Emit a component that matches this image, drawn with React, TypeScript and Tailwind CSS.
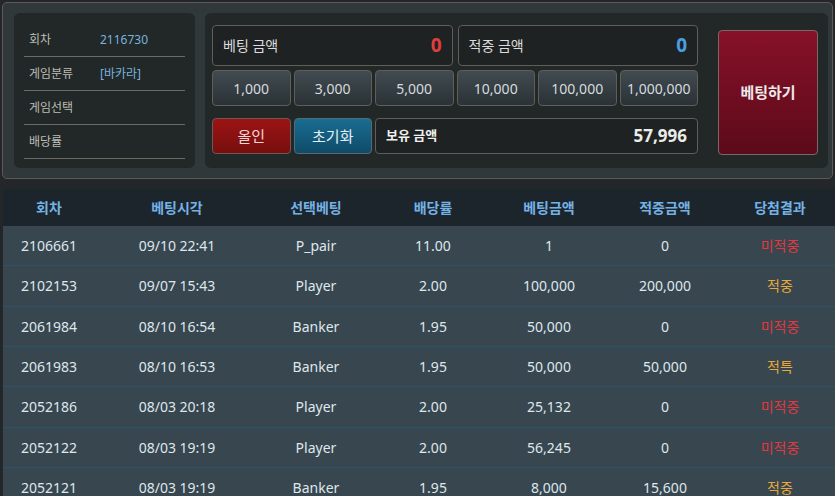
import React from "react";

const rows = [
  ["2106661", "09/10 22:41", "P_pair", "11.00", "1", "0", "미적중"],
  ["2102153", "09/07 15:43", "Player", "2.00", "100,000", "200,000", "적중"],
  ["2061984", "08/10 16:54", "Banker", "1.95", "50,000", "0", "미적중"],
  ["2061983", "08/10 16:53", "Banker", "1.95", "50,000", "50,000", "적특"],
  ["2052186", "08/03 20:18", "Player", "2.00", "25,132", "0", "미적중"],
  ["2052122", "08/03 19:19", "Player", "2.00", "56,245", "0", "미적중"],
  ["2052121", "08/03 19:19", "Banker", "1.95", "8,000", "15,600", "적중"],
];

const headers = ["회차", "베팅시각", "선택베팅", "배당률", "베팅금액", "적중금액", "당첨결과"];
const chips = ["1,000", "3,000", "5,000", "10,000", "100,000", "1,000,000"];

const info: [string, string][] = [
  ["회차", "2116730"],
  ["게임분류", "[바카라]"],
  ["게임선택", ""],
  ["배당률", ""],
];

export default function App() {
  return (
    <div
      className="w-[835px] h-[496px] overflow-hidden bg-[#23272a]"
      style={{ fontFamily: '"Noto Sans", "Noto Sans CJK KR", sans-serif' }}
    >
      <div className="ml-[2px] mt-[2px] w-[831px] h-[177px] border border-[#5c5b53] rounded-[5px] bg-[#30383a] flex gap-[10px] pl-[11px] pr-[4px] pt-[10px]">
        {/* left info panel */}
        <div className="w-[181px] h-[155px] rounded-[6px] bg-[#222727] px-[10px] pt-[10px]">
          {info.map(([k, v]) => (
            <div key={k} className="h-[34px] border-b border-[#6b6a62] flex items-center pl-[5px]">
              <div className="w-[71px] text-[12px] text-[#bdbdb5]">{k}</div>
              <div className="text-[12px] text-[#78b3de]">{v}</div>
            </div>
          ))}
        </div>
        {/* middle panel */}
        <div className="flex-1 h-[155px] rounded-[6px] bg-[#222727] pl-[7px] pt-[12px] flex">
          <div className="w-[486px] flex flex-col">
            <div className="grid grid-cols-2 gap-[5px] h-[41px]">
              <div className="rounded-[4px] border border-[#5f5e57] bg-[#1f2222] flex items-center justify-between px-[10px]">
                <span className="text-[14px] text-[#dcdcdc]">베팅 금액</span>
                <span className="text-[19px] font-bold text-[#e23c3c]">0</span>
              </div>
              <div className="rounded-[4px] border border-[#5f5e57] bg-[#1f2222] flex items-center justify-between px-[10px]">
                <span className="text-[14px] text-[#dcdcdc]">적중 금액</span>
                <span className="text-[19px] font-bold text-[#4a9fe4]">0</span>
              </div>
            </div>
            <div className="grid grid-cols-6 gap-[3px] h-[36px] mt-[4px]">
              {chips.map((c) => (
                <div
                  key={c}
                  className="rounded-[4px] border border-[#5f5e57] bg-gradient-to-b from-[#414b51] to-[#2a3236] flex items-center justify-center text-[14px] text-[#d6dbde]"
                >
                  {c}
                </div>
              ))}
            </div>
            <div className="grid grid-cols-6 gap-[3px] h-[36px] mt-[12px]">
              <div className="rounded-[4px] border border-[#6a5a55] bg-gradient-to-b from-[#9c1414] to-[#780e0e] flex items-center justify-center text-[15px] text-[#f2d6d6]">
                올인
              </div>
              <div className="rounded-[4px] border border-[#556a74] bg-gradient-to-b from-[#1a6d92] to-[#0f4b69] flex items-center justify-center text-[15px] text-[#e4eef4]">
                초기화
              </div>
              <div className="col-span-4 rounded-[4px] border border-[#5f5e57] bg-[#1f2222] flex items-center justify-between px-[10px]">
                <span className="text-[13px] font-bold text-[#f0f0f0]">보유 금액</span>
                <span className="text-[17px] font-bold text-[#ecece8]">57,996</span>
              </div>
            </div>
          </div>
          <div className="ml-[20px] mt-[5px] w-[100px] h-[125px] rounded-[4px] border border-[#7a6868] bg-gradient-to-b from-[#871128] to-[#5c0a1a] flex items-center justify-center text-[15px] font-bold text-[#eeeaea]">
            베팅하기
          </div>
        </div>
      </div>

      {/* table */}
      <div className="mt-[10px] ml-[3px] w-[832px]">
        <div className="grid grid-cols-[92px_164px_114px_120px_112px_120px_1fr] h-[37px] bg-[#1d252c] items-center text-center text-[14px] font-bold text-[#74b2e6]">
          {headers.map((h) => (
            <div key={h}>{h}</div>
          ))}
        </div>
        {rows.map((r, i) => (
          <div
            key={i}
            className="grid grid-cols-[92px_164px_114px_120px_112px_120px_1fr] h-[40.33px] bg-[#37464f] border-b border-[#2c5365] items-center text-center text-[14px] text-[#dfe7ec]"
          >
            {r.map((c, j) => (
              <div
                key={j}
                className={
                  j === 6
                    ? c === "미적중"
                      ? "text-[#e2383f]"
                      : "text-[#e9a83b]"
                    : ""
                }
              >
                {c}
              </div>
            ))}
          </div>
        ))}
      </div>
    </div>
  );
}
